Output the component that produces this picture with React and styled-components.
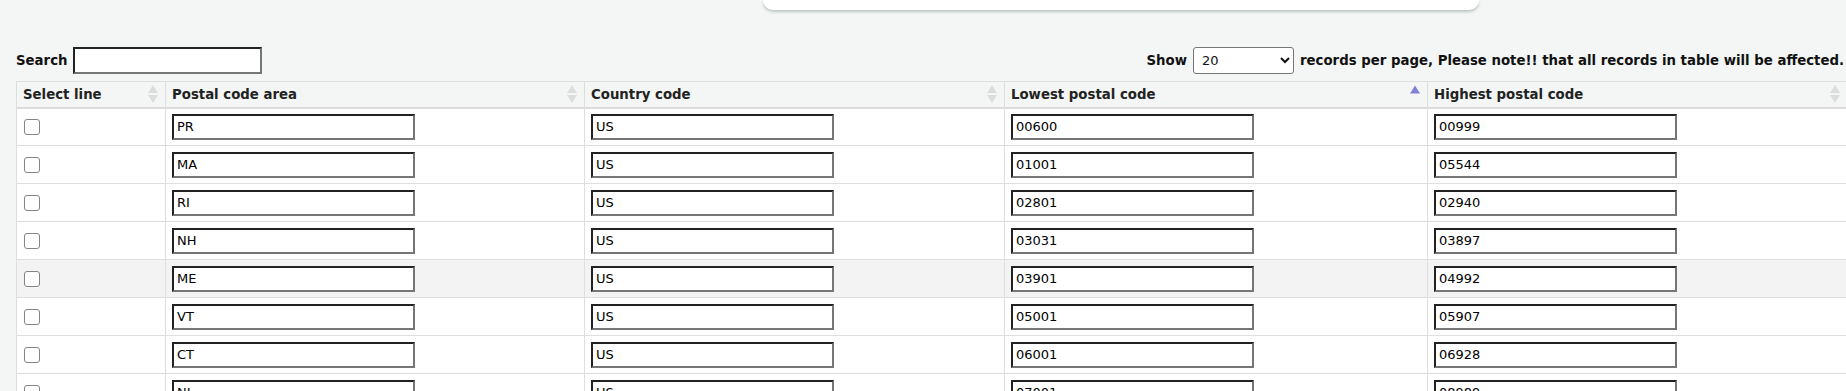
import styled, { createGlobalStyle } from "styled-components";

const GlobalStyle = createGlobalStyle`
  html, body {
    margin: 0;
    padding: 0;
    background: #f4f6f5;
    overflow: hidden;
  }
  body {
    font-family: "DejaVu Sans", Verdana, sans-serif;
    color: #111;
  }
`

const rows = [
	{ area: "PR", country: "US", low: "00600", high: "00999" },
	{ area: "MA", country: "US", low: "01001", high: "05544" },
	{ area: "RI", country: "US", low: "02801", high: "02940" },
	{ area: "NH", country: "US", low: "03031", high: "03897" },
	{ area: "ME", country: "US", low: "03901", high: "04992", hover: true },
	{ area: "VT", country: "US", low: "05001", high: "05907" },
	{ area: "CT", country: "US", low: "06001", high: "06928" },
	{ area: "NJ", country: "US", low: "07001", high: "08989" },
	{ area: "NY", country: "US", low: "10001", high: "14975" },
]

const columns = [
	{ title: "Select line", width: 149 },
	{ title: "Postal code area", width: 419 },
	{ title: "Country code", width: 420 },
	{ title: "Lowest postal code", width: 423, sorted: true },
	{ title: "Highest postal code", width: 420 },
]

function SortIcon({ active }) {
	if (active) {
		return (
			<svg width="12" height="20" viewBox="0 0 12 20">
				<path d="M6 1.5 L11 9.5 L1 9.5 Z" fill="#8080da" />
			</svg>
		)
	}
	return (
		<svg width="12" height="20" viewBox="0 0 12 20">
			<path d="M6 1 L11 9 L1 9 Z" fill="#dcdcdc" />
			<path d="M6 19 L11 11 L1 11 Z" fill="#dcdcdc" />
		</svg>
	)
}

export default function App() {
	return (
		<Page>
			<GlobalStyle />
			<TopStrip>
				<Card />
			</TopStrip>

			<Toolbar>
				<Label>
					Search <SearchBox type="text" />
				</Label>
				<Label>
					Show
					<PageSize defaultValue="20">
						<option>10</option>
						<option>20</option>
						<option>50</option>
						<option>100</option>
					</PageSize>
					records per page, Please note!! that all records in table will be affected.
				</Label>
			</Toolbar>

			<Table>
				<colgroup>
					{columns.map(c => <col key={c.title} style={{ width: c.width }} />)}
				</colgroup>
				<thead>
					<tr>
						{columns.map(c => (
							<Th key={c.title}>
								<HeadInner>
									<span>{c.title}</span>
									<SortIcon active={c.sorted} />
								</HeadInner>
							</Th>
						))}
					</tr>
				</thead>
				<tbody>
					{rows.map(r => (
						<Row key={r.area} $hover={r.hover}>
							<Td><Check type="checkbox" /></Td>
							<Td><CellInput defaultValue={r.area} /></Td>
							<Td><CellInput defaultValue={r.country} /></Td>
							<Td><CellInput defaultValue={r.low} /></Td>
							<Td><CellInput defaultValue={r.high} /></Td>
						</Row>
					))}
				</tbody>
			</Table>
		</Page>
	)
}

const Page = styled.div`
	width: 1846px;
	height: 391px;
`

const TopStrip = styled.div`
	display: flex;
	padding-left: 763px;
`

const Card = styled.div`
	width: 716px;
	height: 10px;
	background: #fff;
	border-radius: 0 0 10px 10px;
	box-shadow: 0 2px 3px rgba(120, 140, 130, 0.45);
`

const Toolbar = styled.div`
	display: flex;
	justify-content: space-between;
	align-items: center;
	padding: 0 2px 0 16px;
	margin-top: 37px;
	height: 27px;
`

const Label = styled.label`
	display: flex;
	align-items: center;
	gap: 5px;
	font-size: 13.3px;
	font-weight: 700;
	color: #111;
	white-space: nowrap;
`

const SearchBox = styled.input`
	box-sizing: border-box;
	width: 189px;
	height: 27px;
	border: 2px solid;
	border-color: #222 #767676 #767676 #222;
	background: #fff;
	margin: 0 0 0 1px;
	padding: 0 3px;
	outline: none;
`

const PageSize = styled.select`
	box-sizing: border-box;
	width: 101px;
	height: 27px;
	border: 1px solid #767676;
	border-radius: 3px;
	background: #fff;
	font-family: "DejaVu Sans", Verdana, sans-serif;
	font-size: 13px;
	color: #111;
	padding: 0 4px;
	margin: 0 1px;
`

const Table = styled.table`
	margin-top: 7px;
	margin-left: 16px;
	width: 1831px;
	table-layout: fixed;
	border-collapse: collapse;
	background: #fff;
`

const Th = styled.th`
	height: 26px;
	box-sizing: border-box;
	padding: 0 6px 0 6px;
	background: #f4f6f5;
	border: 1px solid #dedede;
	border-bottom: 2px solid #dcdcdc;
	text-align: left;
	font-size: 13.3px;
	font-weight: 700;
	color: #222;
`

const HeadInner = styled.div`
	display: flex;
	align-items: center;
	justify-content: space-between;
`

const Row = styled.tr`
	height: 38px;
	background: ${props => props.$hover ? "#f3f3f3" : "#fff"};
`

const Td = styled.td`
	padding: 0 6px;
	border: 1px solid #dedede;
	vertical-align: middle;
`

const Check = styled.input`
	appearance: none;
	display: block;
	box-sizing: border-box;
	width: 16px;
	height: 16px;
	margin: 0 0 0 1px;
	border: 1.5px solid #858585;
	border-radius: 3px;
	background: #fff;
`

const CellInput = styled.input`
	display: block;
	box-sizing: border-box;
	width: 243px;
	height: 26px;
	border: 2px solid;
	border-color: #222 #767676 #767676 #222;
	background: #fff;
	padding: 0 3px;
	margin: 0;
	font-family: "DejaVu Sans", Verdana, sans-serif;
	font-size: 13px;
	color: #000;
	outline: none;
`
